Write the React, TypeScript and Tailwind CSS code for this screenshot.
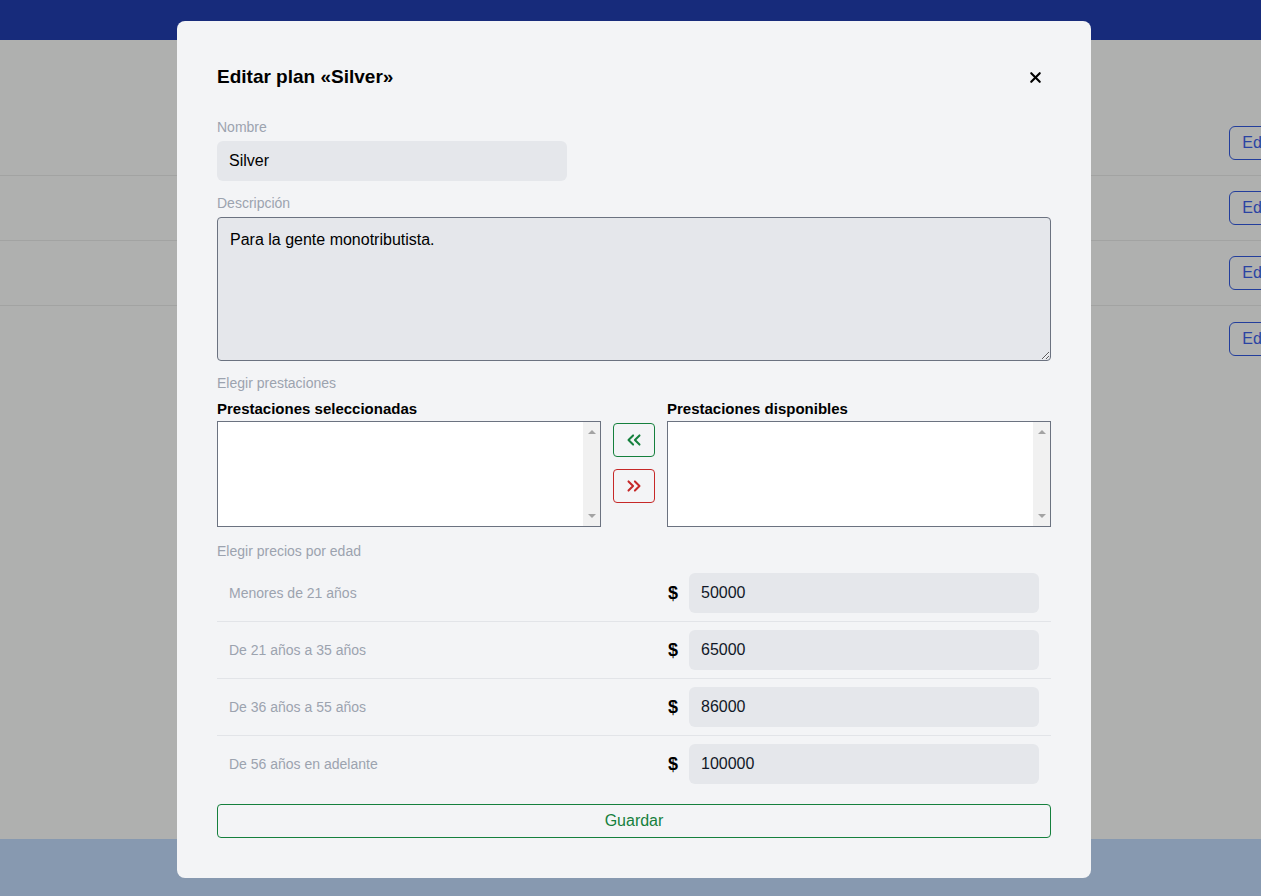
import { X, ChevronsLeft, ChevronsRight } from "lucide-react"

const precios = [
	{ label: "Menores de 21 años", value: "50000" },
	{ label: "De 21 años a 35 años", value: "65000" },
	{ label: "De 36 años a 55 años", value: "86000" },
	{ label: "De 56 años en adelante", value: "100000" },
]

function ListBox() {
	return (
		<div className="flex h-[106px] w-full border border-[#6b7280] bg-white">
			<div className="flex-1" />
			{/* fake scrollbar */}
			<div className="flex w-[17px] flex-col items-center justify-between bg-[#f1f1f1] py-[8px]">
				<div className="h-0 w-0 border-x-[4px] border-b-[4px] border-x-transparent border-b-[#a3a3a3]" />
				<div className="h-0 w-0 border-x-[4px] border-t-[4px] border-x-transparent border-t-[#a3a3a3]" />
			</div>
		</div>
	)
}

export default function App() {
	return (
		<div className="relative flex h-[896px] w-full flex-col overflow-hidden font-['Liberation_Sans',Arial,sans-serif] text-black">
			{/* Page behind the overlay */}
			<div className="h-10 bg-[#172b7b]" />
			<div className="flex flex-1 flex-col bg-[#afb0af] pt-[71px]">
				{[0, 1, 2, 3].map((i) => (
					<div
						key={i}
						className={`flex h-[65px] items-center justify-end ${i < 3 ? "border-b border-[#a2a3a2]" : ""}`}
					>
						<button className="-mr-[36px] h-[34px] rounded-md border border-[#233e9c] px-3 text-base text-[#2a43a3]">
							Editar
						</button>
					</div>
				))}
			</div>
			<div className="h-[57px] bg-[#8799b0]" />

			{/* Modal */}
			<div className="absolute left-[177px] top-[21px] w-[914px] rounded-lg bg-[#f3f4f6] px-10 pb-10 pt-10">
				<div className="flex h-8 items-center justify-between">
					<h2 className="text-[19px] font-bold">Editar plan «Silver»</h2>
					<button className="mr-[7px] text-black">
						<X size={17} strokeWidth={3} />
					</button>
				</div>

				<label className="mt-6 block text-sm leading-5 text-[#9ca3af]">Nombre</label>
				<div className="mt-1 flex h-10 w-[350px] items-center rounded-md bg-[#e5e7eb] px-3 text-base">
					Silver
				</div>

				<label className="mt-3 block text-sm leading-5 text-[#9ca3af]">Descripción</label>
				<textarea
					className="mt-1 block h-[144px] w-full resize-y rounded-[4px] border border-[#6b7280] bg-[#e5e7eb] px-3 pt-[10px] text-base leading-6 outline-none"
					defaultValue="Para la gente monotributista."
				/>

				<label className="mt-3 block text-sm leading-5 text-[#9ca3af]">Elegir prestaciones</label>
				<div className="mt-[6px] flex items-start gap-3">
					<div className="flex-1">
						<div className="h-[22px] text-[15px] font-bold leading-5">Prestaciones seleccionadas</div>
						<ListBox />
					</div>
					<div className="flex w-[42px] flex-col gap-3 pt-[24px]">
						<button className="flex h-[34px] items-center justify-center rounded-[4px] border border-[#15803d] text-[#15803d]">
							<ChevronsLeft size={22} strokeWidth={2.2} />
						</button>
						<button className="flex h-[34px] items-center justify-center rounded-[4px] border border-[#c62828] text-[#c62828]">
							<ChevronsRight size={22} strokeWidth={2.2} />
						</button>
					</div>
					<div className="flex-1">
						<div className="h-[22px] text-[15px] font-bold leading-5">Prestaciones disponibles</div>
						<ListBox />
					</div>
				</div>

				<label className="mt-[14px] block text-sm leading-5 text-[#9ca3af]">Elegir precios por edad</label>
				<div className="mt-1 flex flex-col">
					{precios.map((p, i) => (
						<div
							key={p.label}
							className={`flex items-center justify-between px-3 py-2 ${i < precios.length - 1 ? "border-b border-[#e2e4e8]" : ""}`}
						>
							<span className="text-sm text-[#9ca3af]">{p.label}</span>
							<div className="flex items-center">
								<span className="mr-[11px] text-lg font-bold">$</span>
								<div className="flex h-10 w-[350px] items-center rounded-md bg-[#e5e7eb] px-3 text-base text-[#111827]">
									{p.value}
								</div>
							</div>
						</div>
					))}
				</div>

				<button className="mt-3 flex h-[34px] w-full items-center justify-center rounded-[4px] border border-[#15803d] text-base text-[#15803d]">
					Guardar
				</button>
			</div>
		</div>
	)
}
